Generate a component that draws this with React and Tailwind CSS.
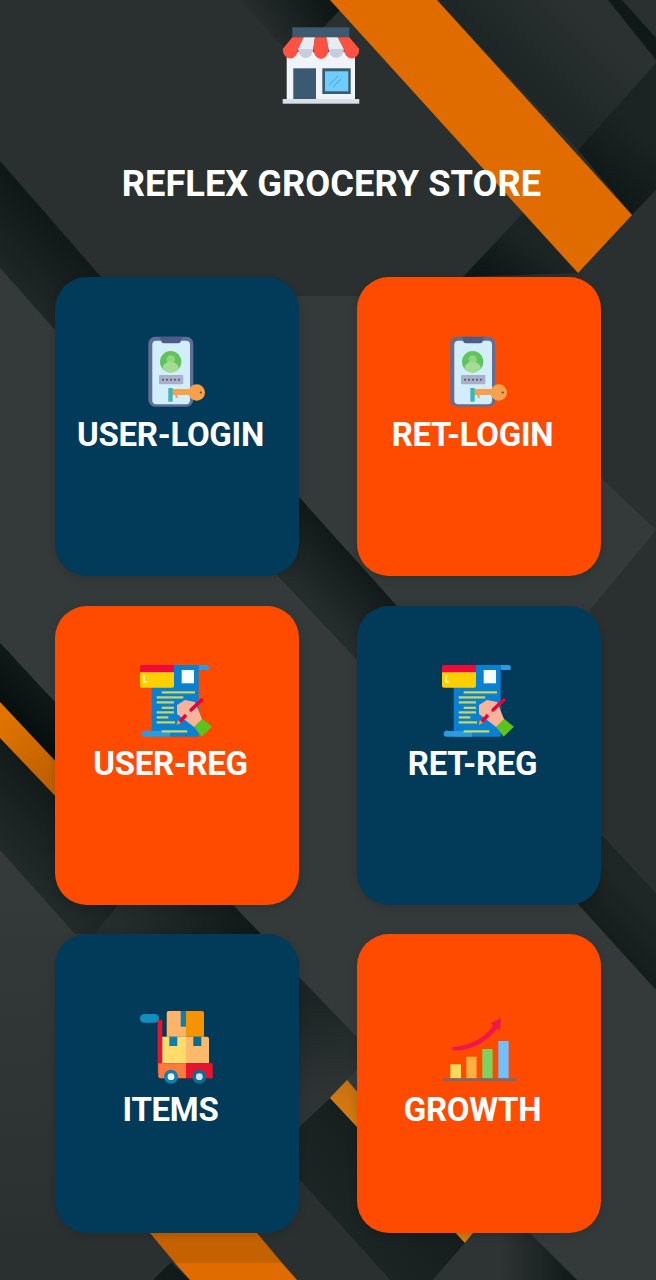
import React from "react";

function Wallpaper() {
  const poly = (pts, fill) => <polygon points={pts} fill={fill} />;
  const grad = (id, x1, y1, x2, y2, a, b) => (
    <linearGradient id={id} gradientUnits="userSpaceOnUse" x1={x1} y1={y1} x2={x2} y2={y2}>
      <stop offset="0" stopColor={a} />
      <stop offset="1" stopColor={b} />
    </linearGradient>
  );
  return (
    <svg className="absolute inset-0" width="656" height="1280" viewBox="0 0 656 1280">
      <defs>
        {grad("leftTop", 0, 268, 50, 215, "#1f2626", "#101717")}
        {grad("topWedge", 260, 40, 320, 0, "#2a3030", "#101717")}
        {grad("rightPanel", 480, 30, 540, -30, "#1f2626", "#2b3131")}
        {grad("rightDark", 590, 190, 640, 130, "#0f1616", "#1c2323")}
        {grad("underOrange", 500, 280, 530, 240, "#101717", "#1d2424")}
        {grad("midBand", 310, 600, 360, 550, "#252c2c", "#0f1616")}
        {grad("leftBand", 0, 850, 70, 780, "#222929", "#0f1616")}
        {grad("leftBandTop", 0, 700, 40, 660, "#080f0f", "#161d1d")}
        {grad("orangeL", 0, 720, 55, 775, "#e07400", "#c06000")}
        {grad("gap3", 118, 920, 261, 920, "#252c2c", "#101717")}
        {grad("centerPanel", 320, 1000, 340, 1090, "#1d2424", "#2e3434")}
        {grad("orangeM", 332, 1110, 352, 1090, "#d87c10", "#c87010")}
        {grad("lowDark", 310, 1190, 400, 1120, "#1d2424", "#141b1b")}
        {grad("rightBand", 590, 930, 630, 890, "#141b1b", "#1f2626")}
        {grad("botRight", 500, 1250, 570, 1250, "#2e3434", "#131a1a")}
        {grad("leftLow", 0, 880, 0, 1280, "#343a3a", "#2a3030")}
      </defs>

      <rect width="656" height="1280" fill="#343a3a" />
      {poly("0,850 75,934 150,1233 150,1280 0,1280", "url(#leftLow)")}
      {/* upper panel */}
      {poly("0,0 656,0 656,530 540,420 480,296 100,296 0,161", "#2a3030")}
      {/* chevron underside and right column */}
      {poly("656,530 590,610 590,822 656,893", "#2a3030")}
      {poly("590,822 656,893 656,990 577,903", "url(#rightBand)")}
      {/* top wedge */}
      {poly("238,0 330,0 340,10 295,58", "url(#topWedge)")}
      {/* right of orange */}
      {poly("437,0 608,0 656,52 656,63 578,150", "url(#rightPanel)")}
      {poly("608,0 622,0 656,38 656,60", "#111818")}
      {poly("578,150 656,63 656,190 632,215", "url(#rightDark)")}
      {poly("523,213 578,273 463,277", "url(#underOrange)")}
      {/* orange bar */}
      {poly("330,0 437,0 632,215 578,273", "#e06c00")}
      {/* left dark band */}
      {poly("0,161 102,278 55,330 0,268", "url(#leftTop)")}
      {/* middle band */}
      {poly("250,450 299,497 397,606 357,660 277,575 250,540", "url(#midBand)")}
      {/* left mid */}
      {poly("0,643 118,770 118,905 95,934 75,934 0,850", "url(#leftBand)")}
      {poly("0,643 60,708 60,766 0,702", "url(#leftBandTop)")}
      {poly("0,702 60,766 60,801 0,738", "url(#orangeL)")}
      {poly("118,905 95,934 261,934 233,905", "url(#gap3)")}
      {/* middle column, row three */}
      {poly("299,977 357,1037 357,1070 299,1127", "url(#centerPanel)")}
      {poly("299,1127 330,1098 465,1243 433,1280 390,1280 299,1180", "url(#lowDark)")}
      {poly("347,1080 473,1225 473,1233 465,1243 330,1098", "url(#orangeM)")}
      {/* bottom */}
      {poly("0,1233 150,1233 175,1263 153,1280 0,1280", "#2a3030")}
      {poly("257,1233 300,1180 390,1280 297,1280", "#2a3030")}
      {poly("171,1262 190,1280 153,1280", "#131a1a")}
      {poly("150,1233 257,1233 282,1263 175,1263", "#c46200")}
      {poly("175,1263 282,1263 297,1280 190,1280", "#e06c00")}
      {poly("465,1243 473,1233 530,1233 577,1280 433,1280", "url(#botRight)")}
    </svg>
  );
}

function StoreIcon() {
  const red = "#ff5242";
  return (
    <svg width="78" height="78" viewBox="0 0 78 78">
      <rect x="10.3" y="0.3" width="57" height="10" fill="#3d5a70" />
      <rect x="4.7" y="25" width="68.3" height="47" fill="#f0f3f7" />
      <rect x="11.3" y="41.3" width="22.7" height="30.7" fill="#3a5a72" />
      <rect x="40.3" y="41.3" width="28.4" height="25.7" fill="#3a5a72" />
      <rect x="43" y="44.3" width="23.3" height="20" fill="#6fcdfb" />
      <path d="M47 58l9-9M51 60l8-8" stroke="#3fa2d8" strokeWidth="1" />
      <rect x="0.7" y="72" width="76.6" height="4.7" fill="#d9dfe6" />
      <path d="M10.3 10.3H21.700L16 22H0.700z" fill={red} />
      <path d="M21.700 10.3H33L31.300 22H16z" fill="#e8ebef" />
      <path d="M33 10.3H44.400L46.600 22H31.300z" fill={red} />
      <path d="M44.400 10.3H55.800L62 22H46.600z" fill="#e8ebef" />
      <path d="M55.800 10.3H67.300L77.300 22H62z" fill={red} />
      <path d="M0.700 22H16a7.650 9.500 0 0 1-15.300 0z" fill={red} />
      <path d="M16 22H31.300a7.650 9 0 0 1-15.300 0z" fill="#c6cede" />
      <path d="M31.300 22H46.600a7.650 10 0 0 1-15.300 0z" fill={red} />
      <path d="M46.600 22H62a7.700 9 0 0 1-15.400 0z" fill="#c6cede" />
      <path d="M62 22H77.300a7.650 9.500 0 0 1-15.300 0z" fill={red} />
    </svg>
  );
}

function PhoneKeyIcon() {
  return (
    <svg width="75" height="75" viewBox="0 0 75 75">
      <rect x="8.3" y="1.7" width="45" height="70" rx="7" fill="#5f6f96" />
      <rect x="12.3" y="5.7" width="37.7" height="63.6" rx="4" fill="#d3eefb" />
      <path d="M20 1.7h22l-1 4a3 3 0 0 1-3 2.6H24a3 3 0 0 1-3-2.6z" fill="#4e5c85" />
      <circle cx="30.7" cy="26.7" r="10.7" fill="#5fc45c" />
      <circle cx="30.7" cy="24.5" r="4.2" fill="#8fd67f" />
      <path d="M22.5 33.5c1-5 4-6.500 8.200-6.500s7.200 1.500 8.200 6.500a10.700 10.700 0 0 1-16.400 0z" fill="#a5dc94" />
      <rect x="19" y="40" width="24.300" height="9.300" rx="1" fill="#aab0c8" />
      <g fill="#4d5570">
        <circle cx="23" cy="44.700" r="1" />
        <circle cx="27" cy="44.700" r="1" />
        <circle cx="31" cy="44.700" r="1" />
        <circle cx="35" cy="44.700" r="1" />
        <circle cx="39" cy="44.700" r="1" />
      </g>
      <rect x="29" y="54" width="24" height="6" fill="#f7a24b" />
      <rect x="28.300" y="53" width="4.400" height="13.700" fill="#3fb5b8" />
      <path d="M35 60h2l1 3h-2z" fill="#f7a24b" />
      <circle cx="56.700" cy="57.500" r="8.300" fill="#f7a24b" />
      <circle cx="60.700" cy="57.500" r="1" fill="#5a3a20" />
    </svg>
  );
}

function DocIcon() {
  const lines = [
    [21.7, 55, 28.300],
    [16.700, 43.300, 33.300],
    [16.700, 34, 38.300],
    [21.700, 34, 43.700],
    [16.700, 34, 48.300],
    [16.700, 28.300, 53.300],
    [16.700, 35, 58.300],
    [21.700, 47.300, 67.300],
  ];
  return (
    <svg width="75" height="75" viewBox="0 0 75 75">
      <path d="M58 1h9a3 3 0 0 1 1 5h-9z" fill="#2c9be0" />
      <rect x="11.700" y="1" width="47" height="71.700" fill="#0a80d0" />
      <path d="M14 67h16v5.700H3.500a3 3 0 0 1 3-5.700z" fill="#2c9be0" />
      <path d="M2 1h32v7.300H0V3a2 2 0 0 1 2-2z" fill="#ef0a3a" />
      <path d="M0 8.300h34v13.400a2 2 0 0 1-2 2H2a2 2 0 0 1-2-2z" fill="#ffd000" />
      <path d="M4 11v7h3" stroke="#fff6c0" strokeWidth="1.500" fill="none" />
      <rect x="41.700" y="6" width="12.300" height="13.300" fill="#f8fbff" />
      {lines.map(([a, b, y]) => (
        <rect key={y} x={a} y={y - 1} width={b - a} height="2.200" fill="#cfd65a" />
      ))}
      <path d="M61 54l11 8.700-10.300 10-8.400-11z" fill="#5cc31e" />
      <path d="M37 41l8-5 10 2 7 17-8 8-9-7-8-6z" fill="#f7b49a" />
      <path d="M61.700 36L51 46" stroke="#e8003a" strokeWidth="3.500" strokeLinecap="round" />
      <path d="M46 51l-6 6.700" stroke="#e8003a" strokeWidth="3.500" />
      <path d="M36.500 61l1.500-5 3 3z" fill="#ff9a30" />
    </svg>
  );
}

function CartIcon() {
  return (
    <svg width="75" height="75" viewBox="0 0 75 75">
      <rect x="0" y="4" width="19" height="8.700" rx="4.300" fill="#0f8fc0" />
      <rect x="17.700" y="10" width="4.600" height="53" fill="#e8142e" />
      <path d="M26.700 3a2 2 0 0 1 2-2H46v25.700H26.700z" fill="#ffb46a" />
      <path d="M46 1h16a2 2 0 0 1 2 2v23.700H46z" fill="#f59300" />
      <rect x="40.700" y="1" width="5.300" height="15.700" fill="#0e7fa8" />
      <path d="M22.300 26.700H46v26.600H22.300z" fill="#ffdc6b" />
      <path d="M46 26.700h21a2 2 0 0 1 2 2v24.600H46z" fill="#ffb96b" />
      <path d="M29.300 26.700h8v9.300h-8z" fill="#0e7fa8" />
      <path d="M53.300 26.700h8v9.300h-8z" fill="#0a6a8f" />
      <path d="M18.300 53.300H46v15H20.300a2 2 0 0 1-2-2z" fill="#ff7a3d" />
      <path d="M46 53.300h26.700v15H46z" fill="#e8142e" />
      <circle cx="31" cy="66.700" r="7" fill="#0e82ad" />
      <circle cx="31" cy="66.700" r="3.400" fill="#eaf4fb" />
      <circle cx="59.300" cy="66.700" r="7" fill="#0a6f96" />
      <circle cx="59.300" cy="66.700" r="3.400" fill="#d6dff0" />
    </svg>
  );
}

function GrowthIcon() {
  return (
    <svg width="75" height="75" viewBox="0 0 75 75">
      <path d="M11 37C28 36 42 28 51 16l-2-3 10-5-1 12-3-1C44 33 28 41 12 40.500a2 2 0 0 1-1-3.500z" fill="#f0184a" />
      <rect x="8.300" y="54.300" width="10.700" height="14" fill="#ffd660" />
      <rect x="24.300" y="46.700" width="10.300" height="21.600" fill="#ffb040" />
      <rect x="40.300" y="39" width="10.300" height="29.300" fill="#7ed060" />
      <rect x="56.300" y="31" width="10.300" height="37.300" fill="#70c0ff" />
      <rect x="0.700" y="68.300" width="74" height="2.700" fill="#7a6a6a" />
    </svg>
  );
}

function Card({ color, pad, label, children }) {
  const bg = color === "blue" ? "bg-[#023a59]" : "bg-[#ff4b00]";
  const top = pad === "low" ? "pt-[76px]" : "pt-[58px]";
  return (
    <div className={`${bg} ${top} h-[299px] rounded-[32px] shadow-[0_2px_8px_rgba(0,0,0,0.15)] flex flex-col items-center`}>
      <div className="h-[75px] w-[75px]">{children}</div>
      <div className="mt-[5px] pr-[13px] text-[33px] leading-[40px] font-bold tracking-[-0.3px] text-white font-['Roboto',sans-serif] whitespace-nowrap">
        {label}
      </div>
    </div>
  );
}

export default function App() {
  return (
    <div className="relative w-[656px] h-[1280px] overflow-hidden bg-[#2a3030]">
      <Wallpaper />
      <div className="relative pt-[27px] px-[55px] flex flex-col">
        <div className="flex justify-center pr-[15px]">
          <StoreIcon />
        </div>
        <h1 className="mt-[55px] pl-[7px] text-center text-[36.25px] leading-[48px] font-bold text-white font-['Roboto',sans-serif] whitespace-nowrap">
          REFLEX GROCERY STORE
        </h1>
        <div className="mt-[69px] grid grid-cols-2 gap-x-[58px] gap-y-[29.5px]">
          <Card color="blue" label="USER-LOGIN"><PhoneKeyIcon /></Card>
          <Card color="orange" label="RET-LOGIN"><PhoneKeyIcon /></Card>
          <Card color="orange" label="USER-REG"><DocIcon /></Card>
          <Card color="blue" label="RET-REG"><DocIcon /></Card>
          <Card color="blue" pad="low" label="ITEMS"><CartIcon /></Card>
          <Card color="orange" pad="low" label="GROWTH"><GrowthIcon /></Card>
        </div>
      </div>
    </div>
  );
}
